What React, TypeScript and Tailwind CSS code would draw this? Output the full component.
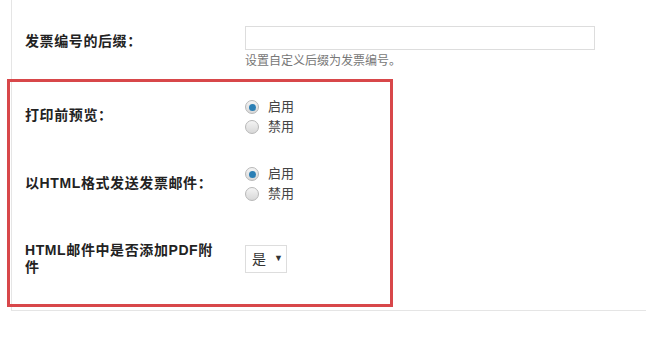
import React from 'react';

const font = { fontFamily: '"Liberation Sans", "Noto Sans CJK SC", sans-serif' };

function Radio({ checked, label }: { checked?: boolean; label: string }) {
  return (
    <div className="flex items-center h-[20px]">
      <span className="w-[14px] h-[14px] rounded-full border border-[#b8b8b8] bg-gradient-to-b from-[#f4f4f4] to-[#d8d8d8] flex items-center justify-center">
        {checked && <span className="w-[7px] h-[7px] rounded-full bg-[#2b7fb5]" />}
      </span>
      <span className="ml-[9px] text-[13px] text-[#444]">{label}</span>
    </div>
  );
}

export default function App() {
  return (
    <div className="relative w-[646px] h-[337px] bg-white overflow-hidden" style={font}>
      <div className="ml-[11px] border-l border-b border-[#e5e5e5] pt-[26px] pl-[13px]">
        {/* suffix */}
        <div className="flex h-[71px]">
          <div className="w-[220px] mt-[6px] text-[14px] leading-[18px] font-bold tracking-[0.6px] text-[#222]">发票编号的后缀：</div>
          <div>
            <div className="w-[350px] h-[24px] border border-[#dddddd] bg-white" />
            <div className="mt-[3px] text-[12px] leading-[16px] text-[#777]">设置自定义后缀为发票编号。</div>
          </div>
        </div>
        {/* preview */}
        <div className="flex h-[67px]">
          <div className="w-[220px] mt-[9px] text-[14px] leading-[18px] font-bold tracking-[0.6px] text-[#222]">打印前预览：</div>
          <div>
            <Radio checked label="启用" />
            <Radio label="禁用" />
          </div>
        </div>
        {/* html mail */}
        <div className="flex h-[78px]">
          <div className="w-[220px] mt-[10px] text-[14px] leading-[18px] font-bold tracking-[0.6px] text-[#222]">以HTML格式发送发票邮件：</div>
          <div>
            <Radio checked label="启用" />
            <Radio label="禁用" />
          </div>
        </div>
        {/* pdf attach */}
        <div className="flex h-[68px]">
          <div className="w-[220px] pr-[22px] text-[14px] leading-[17px] font-bold tracking-[0.6px] text-[#222]">HTML邮件中是否添加PDF附件</div>
          <div className="mt-[3px]">
            <div className="w-[42px] h-[28px] border border-[#dddddd] flex items-center pl-[6px]">
              <span className="text-[14px] text-[#333]">是</span>
              <span className="ml-[8px] text-[9px] text-[#333]">▼</span>
            </div>
          </div>
        </div>
      </div>
      <div className="absolute left-[7px] top-[79px] w-[386px] h-[228px] border-[3px] border-[#d8474a]" />
    </div>
  );
}
